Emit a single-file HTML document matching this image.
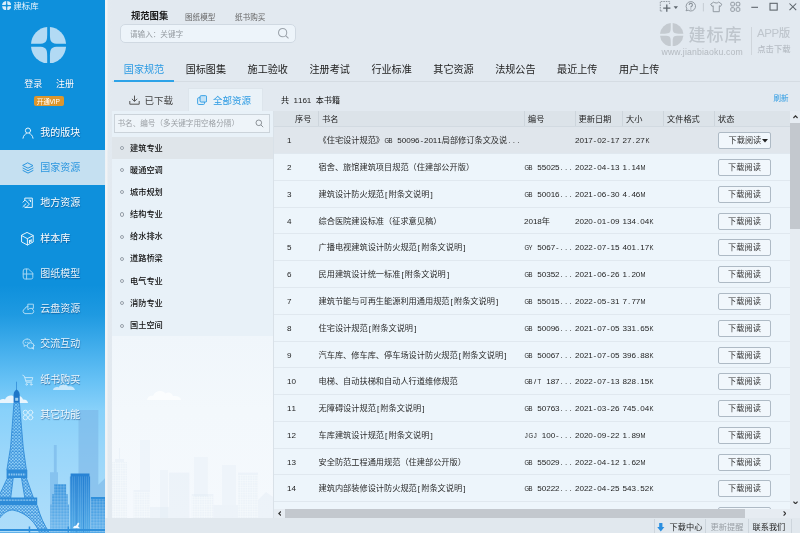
<!DOCTYPE html>
<html lang="zh-CN">
<head>
<meta charset="utf-8">
<title>建标库</title>
<style>
*{margin:0;padding:0;box-sizing:border-box}
html,body{width:800px;height:533px;overflow:hidden}
body{position:relative;background:#e2e9f0;font-family:"Liberation Sans","Noto Sans CJK SC",sans-serif;color:#333}
.t{position:absolute;white-space:nowrap;line-height:1}
#app{position:absolute;left:0;top:0;width:800px;height:533px;overflow:hidden;will-change:transform;opacity:.999}
#side{position:absolute;left:0;top:0;width:105px;height:533px;background:linear-gradient(to bottom,#0e90dc 0,#0e90dc 285px,#1f9ae1 315px,#43aeec 348px,#66c1f5 380px,#88d1fa 410px,#99d6fa 450px,#a7dbfa 500px,#aeddfa 533px);overflow:hidden}
#sidegap{position:absolute;left:105px;top:0;width:7px;height:533px;background:linear-gradient(to right,#e9f1f8 0,#f3f4f5 1.2px,#f1f3f5 2px,#e3eaf0 3px,#e2e9f0 7px)}
.menu{position:absolute;left:0;width:105px;height:35px;color:#fff;font-size:10px}
.menu .t{left:40.3px;top:13.2px;text-shadow:.4px .6px 1px rgba(0,50,110,.55)}
.menu.sel{background:#c5e0f1;color:#2b96df}
.menu.sel .t{text-shadow:none}
.menu svg{position:absolute;left:21.5px;top:12.2px;overflow:visible;opacity:.9}
.menu.lo svg{opacity:.62}
.menu.lo .t{color:rgba(255,255,255,.9)}
.menu.sel svg{opacity:1}
.c{display:inline-block;width:4.45px;text-align:center;font-size:8.1px;color:#1f1f1f}
.u{transform:scaleX(.74)}
.sim{font-family:"Liberation Sans","Noto Sans CJK SC",sans-serif}
.row{position:absolute;left:274px;width:516px;height:27px;background:#edf5fb;border-bottom:1px solid #e0e8ef;font-size:8.2px;color:#2a2a2a}
.row .t{top:10.1px}
.row.sel{background:#e0e6ec}
.btn{position:absolute;left:444px;top:5.4px;width:53px;height:16.6px;border:1px solid #aebac5;border-radius:2px;background:#f1f7fc;font-size:8.2px;text-align:center;line-height:15.6px;color:#333}
.cat{position:absolute;left:112px;width:161px;height:22px;font-size:8.2px;color:#111;font-family:"Liberation Sans","Noto Sans CJK SC",sans-serif;font-weight:500}
.cat .t{left:18px;top:7.7px}
.cat i{position:absolute;left:8.2px;top:9px;width:4.2px;height:4.2px;border:1px solid #949ea8;border-radius:50%;background:#f0f4f8}
.cat.sel{background:#dfe5ea}
.tab{position:absolute;top:64.7px;font-size:10.1px;color:#222;line-height:1;white-space:nowrap}
.hd{position:absolute;top:4.6px;font-size:8.2px;line-height:1;white-space:nowrap;color:#222}
.vsep{position:absolute;top:0;width:1px;height:15px;background:#cdd5dc}
</style>
</head>
<body>
<div id="app">

<div id="side">
<svg style="position:absolute;left:0;top:370px" width="105" height="163" viewBox="0 370 105 163">
<defs>
<pattern id="lat" width="3.200" height="3.200" patternUnits="userSpaceOnUse"><rect width="3.200" height="3.200" fill="#7fc3f1" fill-opacity=".35"/><path d="M0 0L3.200 3.200M3.200 0L0 3.200M0 0H3.200" stroke="#2a86d6" stroke-width=".6"/></pattern>
<pattern id="grd" width="1.5" height="1.5" patternUnits="userSpaceOnUse"><rect width="1.5" height="1.5" fill="#ffffff" fill-opacity=".0"/><path d="M0 .2H1.5M.2 0V1.5" stroke="#d8ecfa" stroke-opacity=".5" stroke-width=".4"/></pattern>
<pattern id="vst" width="2" height="4" patternUnits="userSpaceOnUse"><path d="M.5 0V4" stroke="#9bd0f5" stroke-opacity=".45" stroke-width=".5"/></pattern>
<linearGradient id="b1" x1="0" y1="0" x2="0" y2="1"><stop offset="0" stop-color="#2f8fdb"/><stop offset="1" stop-color="#6ab6ed"/></linearGradient>
<linearGradient id="b2" x1="0" y1="0" x2="0" y2="1"><stop offset="0" stop-color="#2782d4"/><stop offset="1" stop-color="#55ade8"/></linearGradient>
<linearGradient id="b3" x1="0" y1="0" x2="0" y2="1"><stop offset="0" stop-color="#2f8fdb"/><stop offset="1" stop-color="#62b2ec"/></linearGradient>
</defs>
<!-- clouds -->
<path d="M-2 403C-1 399 3 398.500 5 399.500C6.500 395.500 12 394 14.500 397C17 394.500 22 395.500 23 399.500C26 399.300 28 401 28 403Z" fill="#e9f5fd"/>
<path d="M53 390C53.500 387 57 386.500 58.500 387.500C60 384 66 383.500 68 386.500C71 385.500 74.500 387 75 390Z" fill="#d3ebfb" fill-opacity=".9"/>
<!-- faint tall buildings -->
<path d="M78.500 410H98.300V484.700L105.300 478V533H78.500Z" fill="#79b2e4" fill-opacity=".55"/>
<path d="M53.900 445H56.700V472.300H58V533H50V472.300H53.900Z" fill="#7fbdec" fill-opacity=".8"/>
<!-- building 1 -->
<path d="M54 484.200H66.100V494.300H67.800V504.500H69.100V533H50.400V504.500H52V494.300H54Z" fill="url(#b1)"/>
<path d="M54 484.200H66.100V494.300H67.800V504.500H69.100V533H50.400V504.500H52V494.300H54Z" fill="url(#grd)"/>
<!-- building 2 -->
<path d="M70.600 473.400H89.500V476.400H90.100V533H69.900V476.400H70.600Z" fill="url(#b2)"/>
<rect x="69.900" y="476.400" width="20.200" height="56.600" fill="url(#vst)"/>
<path d="M76.500 476.400V533M83.500 476.400V533" stroke="#1f78cc" stroke-opacity=".5" stroke-width=".8"/>
<!-- building 3 -->
<rect x="90.900" y="497" width="14.400" height="36" fill="url(#b3)"/>
<rect x="90.900" y="499" width="14.400" height="34" fill="url(#grd)"/>
<!-- eiffel -->
<g>
<path d="M16.500 381.700V391" stroke="#2a84d2" stroke-width=".7"/>
<path d="M13.600 402.500V394.500C13.600 391.500 16 390 16.600 389.500C17.300 390 19.700 391.500 19.700 394.500V402.500Z" fill="#1f76c8"/>
<rect x="15.200" y="397.800" width="3" height="3" fill="#9fd0f3"/>
<path d="M14 402.500H19.400L23.200 447L26.400 470H6.900L10.600 447Z" fill="url(#lat)" stroke="#2a86d6" stroke-width=".8"/>
<path d="M6.600 469.800H27.300V478H6.600Z" fill="#2d8bd8"/>
<path d="M8.500 474.500H25.500" stroke="#8cc6f0" stroke-width="2" stroke-dasharray="1.600 .8"/>
<path d="M7.400 478H13.200L10.700 498H-1V496Z" fill="url(#lat)" stroke="#2a86d6" stroke-width=".8"/>
<path d="M21.500 478H26.400L33.500 498H24.800Z" fill="url(#lat)" stroke="#2a86d6" stroke-width=".8"/>
<path d="M-1 497.600H37.200V505.300H-1Z" fill="#2d8bd8"/>
<path d="M0 500.200H36" stroke="#8cc6f0" stroke-width="1.200" stroke-dasharray="2.200 .7"/>
<path d="M25 505.300H37.200C40 516 44 525 49.600 533H39.700C36 524 28 513 13 510C8 510 3 513 -1 519V505.300Z" fill="url(#lat)"/>
<path d="M37.200 505.300C40 516 44 525 49.600 533M39.700 533C36 524 28 513 13 510C8 510 3 513 -1 519" fill="none" stroke="#2d8bd8" stroke-width=".9"/>
</g>
<!-- railing -->
<rect x="0" y="529" width="105" height="2" fill="#2f90dc"/>
<rect x="28.700" y="526.500" width="1.500" height="6.500" fill="#2f90dc"/><rect x="67.600" y="526.500" width="1.500" height="6.500" fill="#2f90dc"/>
<path d="M0 533H105" stroke="#4aa3e4" stroke-width="1.500"/>
<!-- cyclist -->
<path d="M73 528.300C73.500 526 75 525.500 76 525.800L77.500 523.200C78.300 522.300 79.600 523 79.200 524L78 526.200L80 528.300Z" fill="#f4faff"/>
</svg>

<svg class="t" style="left:2px;top:0.8px" width="9.4" height="9.4" viewBox="0 0 36 36" preserveAspectRatio="none" fill="#d9edf9"><path d="M15.8 0.05V9C15.8 15 15 15.8 9 15.8H0.05A18 18 0 0 1 15.8 0.05Z" transform="rotate(0 18 18)"/><path d="M15.8 0.05V9C15.8 15 15 15.8 9 15.8H0.05A18 18 0 0 1 15.8 0.05Z" transform="rotate(90 18 18)"/><path d="M15.8 0.05V9C15.8 15 15 15.8 9 15.8H0.05A18 18 0 0 1 15.8 0.05Z" transform="rotate(180 18 18)"/><path d="M15.8 0.05V9C15.8 15 15 15.8 9 15.8H0.05A18 18 0 0 1 15.8 0.05Z" transform="rotate(270 18 18)"/></svg>
<div class="t" style="left:13.5px;top:1.5px;font-size:8.4px;color:#e8f4fc">建标库</div>
<svg class="t" style="left:30.7px;top:26.6px" width="35.1" height="36.6" viewBox="0 0 36 36" preserveAspectRatio="none" fill="#b2daf4"><path d="M16.6 0.05V7.5C16.6 15 15 16.6 7.5 16.6H0.05A18 18 0 0 1 16.6 0.05Z" transform="rotate(0 18 18)"/><path d="M16.6 0.05V7.5C16.6 15 15 16.6 7.5 16.6H0.05A18 18 0 0 1 16.6 0.05Z" transform="rotate(90 18 18)"/><path d="M16.6 0.05V7.5C16.6 15 15 16.6 7.5 16.6H0.05A18 18 0 0 1 16.6 0.05Z" transform="rotate(180 18 18)"/><path d="M16.6 0.05V7.5C16.6 15 15 16.6 7.5 16.6H0.05A18 18 0 0 1 16.6 0.05Z" transform="rotate(270 18 18)"/></svg>
<div class="t" style="left:24.3px;top:79.5px;font-size:9px;color:#fff;text-shadow:0 0 1px rgba(0,60,130,.4)">登录</div>
<div class="t" style="left:56px;top:79.5px;font-size:9px;color:#fff;text-shadow:0 0 1px rgba(0,60,130,.4)">注册</div>
<div style="position:absolute;left:34px;top:95.5px;width:29.5px;height:10.5px;border-radius:2px;background:#dc962d"></div>
<div class="t" style="left:36.8px;top:98.6px;font-size:6.6px;color:#fff;letter-spacing:-.2px">开通VIP</div>
<div class="menu" style="top:114.7px"><svg width="12" height="12" viewBox="0 0 12 12" stroke="currentColor" fill="none" stroke-width="1" stroke-linecap="round" stroke-linejoin="round"><circle cx="6" cy="3.6" r="2.6"/><path d="M1 11.2c.4-2.6 2-4.2 3.4-4.6M11 11.2c-.4-2.6-2-4.2-3.4-4.6"/></svg><div class="t">我的版块</div></div>
<div class="menu sel" style="top:149.9px"><svg width="12" height="12" viewBox="0 0 12 12" stroke="currentColor" fill="none" stroke-width="1" stroke-linecap="round" stroke-linejoin="round"><path d="M6 1L11 3.6L6 6.2L1 3.6Z"/><path d="M1 6.1L6 8.7L11 6.1"/><path d="M1 8.5L6 11.1L11 8.5"/></svg><div class="t">国家资源</div></div>
<div class="menu" style="top:185.2px"><svg width="12" height="12" viewBox="0 0 12 12" stroke="currentColor" fill="none" stroke-width="1" stroke-linecap="round" stroke-linejoin="round"><path d="M2.8 2.6V1.100H10.300V10.400H2.800V9.800"/><path d="M1 5.100L3.200 2.900L7.400 7.100L3.700 10.800M1 9.600L3.900 6.800M7 3.100H8.500V4.600"/></svg><div class="t">地方资源</div></div>
<div class="menu" style="top:220.4px"><svg style="left:20.600px;top:11.300px" width="12.800" height="13.600" viewBox="0 0 13 13.600" stroke="currentColor" fill="none" stroke-width="1" stroke-linecap="round" stroke-linejoin="round"><path d="M6.500 .5L12.400 3.500V10L6.500 13.100L.6 10V3.500Z"/><path d="M.6 3.500L6.500 6.700L12.400 3.500M6.500 6.700V13.100"/><path d="M8.600 8.300v2.400M10.300 7.500v2.400M8.600 9.300l1.700-.8" stroke-width="1.100"/></svg><div class="t">样本库</div></div>
<div class="menu lo" style="top:255.7px"><svg width="12" height="12" viewBox="0 0 12 12" stroke="currentColor" fill="none" stroke-width="1" stroke-linecap="round" stroke-linejoin="round"><path d="M1.2 2.6a1.6 1.6 0 0 1 1.6-1.6H6.4L10.8 5V9.4a1.6 1.6 0 0 1-1.6 1.6H2.8a1.6 1.6 0 0 1-1.6-1.6Z"/><path d="M4.6 1V11M1.2 6H10.8"/></svg><div class="t">图纸模型</div></div>
<div class="menu lo" style="top:290.9px"><svg width="13" height="12" viewBox="0 0 13 12" stroke="currentColor" fill="none" stroke-width="1" stroke-linecap="round" stroke-linejoin="round"><path d="M3.2 10.6a2.4 2.4 0 0 1-.4-4.7A3.3 3.3 0 0 1 6 3.4M3.2 10.6H9.6a2.3 2.3 0 0 0 .8-4.4"/><path d="M6.2 1.2H11.4V5.4H7.8L6.2 6.6Z"/></svg><div class="t">云盘资源</div></div>
<div class="menu lo" style="top:326.2px"><svg width="13" height="12" viewBox="0 0 13 12" stroke="currentColor" fill="none" stroke-width="1" stroke-linecap="round" stroke-linejoin="round"><path d="M5.2 1C2.8 1 1 2.5 1 4.4c0 1 .5 1.9 1.3 2.5L2 8.4l1.7-.9c.5.1 1 .2 1.5.2"/><path d="M5.2 1c2.3 0 4.2 1.5 4.2 3.4"/><ellipse cx="8.6" cy="7.6" rx="3.4" ry="2.8"/><path d="M10 10.2l1.6 1-.2-1.8"/><path d="M3.4 4.2h.1M5.2 4.2h.1M7 4.2h.1" stroke-width="1.1"/></svg><div class="t">交流互动</div></div>
<div class="menu lo" style="top:361.4px"><svg width="13" height="12" viewBox="0 0 13 12" stroke="currentColor" fill="none" stroke-width="1" stroke-linecap="round" stroke-linejoin="round"><path d="M.8 1.300L2.400 2.200L4.200 8.200H9.800"/><path d="M3 3.600H10.800L9.800 6.800H4"/><circle cx="4.700" cy="10.400" r=".8"/><circle cx="9.200" cy="10.400" r=".8"/></svg><div class="t">纸书购买</div></div>
<div class="menu lo" style="top:396.7px"><svg width="12" height="12" viewBox="0 0 12 12" stroke="currentColor" fill="none" stroke-width="1" stroke-linecap="round" stroke-linejoin="round"><circle cx="3.4" cy="3.4" r="2.2"/><circle cx="8.6" cy="3.4" r="2.2"/><circle cx="3.4" cy="8.6" r="2.2"/><circle cx="8.6" cy="8.6" r="2.2"/></svg><div class="t">其它功能</div></div>
</div>
<div id="sidegap"></div>
<div class="t" style="left:131px;top:12px;font-size:9.3px;font-weight:bold;color:#1a1a1a">规范图集</div>
<div class="t" style="left:185px;top:13.7px;font-size:7.6px;color:#666">图纸模型</div>
<div class="t" style="left:235px;top:13.7px;font-size:7.6px;color:#666">纸书购买</div>
<div style="position:absolute;left:120px;top:24px;width:176px;height:19px;border:1px solid #d0d9e2;border-radius:5px;background:#edf4fa"></div>
<div class="t" style="left:130px;top:30.5px;font-size:7.6px;color:#959ba1">请输入：关键字</div>
<svg class="t" style="left:276.5px;top:27px" width="13" height="13" viewBox="0 0 12 12" fill="none" stroke="#9aa2aa" stroke-width=".95"><circle cx="5.2" cy="5.2" r="3.8"/><path d="M8 8L10.6 10.6"/></svg>
<svg class="t" style="left:655px;top:0" width="145" height="14" viewBox="655 0 145 14" fill="none" stroke="#8a929a" stroke-width=".9">
<path d="M660.3 11V1.5H669.6V4" stroke-dasharray="1.6 .9"/><path d="M660.3 11H663" stroke-dasharray="1.6 .9"/>
<path d="M666.8 4.6V11.8M663.2 8.2H670.4" stroke="#5f676f" stroke-width="1.3"/>
<path d="M673.6 6.2H678L675.8 9Z" fill="#5f676f" stroke="none"/>
<path d="M690.8 1.6a4.7 4.7 0 1 1-2.6 8.6L686 10.8l.9-1.9A4.7 4.7 0 0 1 690.8 1.600Z"/>
<path d="M689.2 4.9a1.6 1.5 0 1 1 2.4 1.3c-.6.4-.8.7-.8 1.4M690.8 8.600v.9" stroke-width="1.1"/>
<path d="M703.4 3V11.400" stroke="#c3cad0"/>
<path d="M713.8 2L710.700 4.200L712 6.400L713.200 5.800V11.700H719.300V5.800L720.500 6.400L721.800 4.200L718.700 2C718 3.300 714.500 3.300 713.800 2Z" stroke-linejoin="round"/>
<rect x="730.8" y="2.300" width="3.600" height="3.600" rx=".9"/><rect x="736.2" y="2.300" width="3.600" height="3.600" rx=".9"/><rect x="730.8" y="7.700" width="3.600" height="3.600" rx=".9"/><rect x="736.2" y="7.700" width="3.600" height="3.600" rx=".9"/>
<path d="M751.3 7.300H758" stroke="#5a6168" stroke-width="1.05"/>
<rect x="770" y="3.300" width="7.200" height="6.800" stroke="#5a6168" stroke-width="1.05"/>
<path d="M789.500 3.500L796.200 10.200M796.200 3.500L789.500 10.200" stroke="#5a6168" stroke-width="1.05"/>
</svg>

<svg class="t" style="left:660.3px;top:23px" width="23.4" height="23.4" viewBox="0 0 36 36" preserveAspectRatio="none" fill="#c4cad0"><path d="M16.5 0.05V7.5C16.5 15 15 16.5 7.5 16.5H0.05A18 18 0 0 1 16.5 0.05Z" transform="rotate(0 18 18)"/><path d="M16.5 0.05V7.5C16.5 15 15 16.5 7.5 16.5H0.05A18 18 0 0 1 16.5 0.05Z" transform="rotate(90 18 18)"/><path d="M16.5 0.05V7.5C16.5 15 15 16.5 7.5 16.5H0.05A18 18 0 0 1 16.5 0.05Z" transform="rotate(180 18 18)"/><path d="M16.5 0.05V7.5C16.5 15 15 16.5 7.5 16.5H0.05A18 18 0 0 1 16.5 0.05Z" transform="rotate(270 18 18)"/></svg>
<div class="t" style="left:688.5px;top:26.500px;font-size:17px;letter-spacing:1px;color:#bfc6cd;font-weight:500">建标库</div>
<div class="t" style="left:661.5px;top:48px;font-size:8.700px;color:#b4bac0;letter-spacing:.15px">www.jianbiaoku.com</div>
<div style="position:absolute;left:750.5px;top:27px;width:1px;height:27.500px;background:#cfd5db"></div>
<div class="t" style="left:757px;top:27.500px;font-size:11.500px;color:#bfc6cd;letter-spacing:-.4px;font-weight:500">APP版</div>
<div class="t" style="left:757.3px;top:45px;font-size:8.300px;color:#b6bdc4;font-weight:500">点击下载</div>

<div class="tab" style="left:123.8px;color:#2c9be3">国家规范</div>
<div class="tab" style="left:185.7px">国标图集</div>
<div class="tab" style="left:247.6px">施工验收</div>
<div class="tab" style="left:309.5px">注册考试</div>
<div class="tab" style="left:371.4px">行业标准</div>
<div class="tab" style="left:433.3px">其它资源</div>
<div class="tab" style="left:495.2px">法规公告</div>
<div class="tab" style="left:557.1px">最近上传</div>
<div class="tab" style="left:619.0px">用户上传</div>
<div style="position:absolute;left:112px;top:81px;width:688px;height:1px;background:#d5dce3"></div>
<div style="position:absolute;left:114px;top:80px;width:59.5px;height:2px;background:#2da3e8"></div>
<div style="position:absolute;left:187.5px;top:88px;width:75.5px;height:23px;background:#eaf2f8;border:1px solid #dde5ec;border-bottom:none"></div>
<svg class="t" style="left:128.5px;top:95.2px" width="11" height="10" viewBox="0 0 11 10" fill="none" stroke="#555" stroke-width="1"><path d="M5.500 .6V6.200M2.900 3.800L5.500 6.400L8.100 3.800M.8 6V9.200H10.200V6"/></svg>
<div class="t" style="left:144.6px;top:95.8px;font-size:9.5px;color:#444">已下载</div>
<svg class="t" style="left:196.600px;top:95px" width="10.400" height="10" viewBox="0 0 11 10.600" fill="none" stroke="#2c9be3" stroke-width="1"><rect x="3.200" y=".7" width="7" height="6.800" rx="1.200" fill="#c3e2f6"/><path d="M3.200 2.900H1.700a1 1 0 0 0-1 1V9a1 1 0 0 0 1 1H6.900a1 1 0 0 0 1-1V7.500"/></svg>
<div class="t" style="left:213px;top:95.8px;font-size:9.5px;color:#2c9be3">全部资源</div>
<div class="t sim" style="left:281px;top:97.2px;font-size:8.1px;color:#111">共<span class="c">&nbsp;</span><span class="c">1</span><span class="c">1</span><span class="c">6</span><span class="c">1</span><span class="c">&nbsp;</span>本书籍</div>
<div class="t" style="left:773.5px;top:94.6px;font-size:7.5px;color:#2c9be3">刷新</div>
<div style="position:absolute;left:112px;top:111px;width:161px;height:407px;background:linear-gradient(to bottom,#e8f1f8 0,#e8f1f8 225px,#f0f6fb 225px,#f3f8fc 300px,#f5f9fd 407px);overflow:hidden"><svg style="position:absolute;left:0;top:0" width="161" height="407" viewBox="112 111 161 407">
<defs><pattern id="g2" width="2.400" height="2.400" patternUnits="userSpaceOnUse"><path d="M0 .3H2.400M.3 0V2.400" stroke="#f7fafd" stroke-opacity=".8" stroke-width=".6"/></pattern></defs>
<path d="M147 400C147.500 396 151 395 153 396C155 390 163 389.500 165.500 393.500C168 391.500 172 392.500 173 396C177 395.500 181 397 181 400Z" fill="#fbfdfe"/>
<g fill="#d9e6f2" fill-opacity=".3">
<path d="M119 448H120V459H124V462H127V518H112V462H115V459H119Z"/>
<rect x="133.500" y="490" width="16.500" height="28"/>
<rect x="150" y="507" width="19" height="11"/>
<rect x="169" y="472.600" width="20.400" height="45.400"/>
<rect x="191.700" y="494" width="21.700" height="24"/>
<rect x="213.400" y="505" width="24.600" height="13"/>
<rect x="238" y="472.600" width="20" height="45.400"/>
<path d="M258 518V500L266 492L273 497V518Z"/>
</g>
<g fill="#dde9f4" fill-opacity=".25">
<rect x="194" y="457" width="13.700" height="40"/>
<rect x="140" y="440" width="10" height="50"/>
<path d="M160 470H168V518H160Z"/>
<rect x="222" y="465" width="14" height="40"/>
</g>
<g fill="url(#g2)">
<rect x="112" y="462" width="15" height="56"/><rect x="133.500" y="492" width="16.500" height="26"/><rect x="191.700" y="496" width="21.700" height="22"/><rect x="238" y="475" width="20" height="43"/>
</g>
</svg>
</div>
<div style="position:absolute;left:273px;top:111px;width:1px;height:407px;background:#d9e1e8"></div>
<div style="position:absolute;left:114px;top:114px;width:156px;height:19px;border:1px solid #cbd3da;background:#eef4f9"></div>
<div class="t" style="left:117.5px;top:119.7px;font-size:7.6px;color:#9a9fa4">书名、编号（多关键字用空格分隔）</div>
<svg class="t" style="left:254.5px;top:119px" width="9" height="9" viewBox="0 0 9 9" fill="none" stroke="#8b9197" stroke-width="1"><circle cx="3.8" cy="3.8" r="2.8"/><path d="M5.9 5.9L8.2 8.2"/></svg>
<div class="cat sel sim" style="top:137.2px"><i></i><div class="t">建筑专业</div></div>
<div class="cat sim" style="top:159.2px"><i></i><div class="t">暖通空调</div></div>
<div class="cat sim" style="top:181.2px"><i></i><div class="t">城市规划</div></div>
<div class="cat sim" style="top:203.4px"><i></i><div class="t">结构专业</div></div>
<div class="cat sim" style="top:225.5px"><i></i><div class="t">给水排水</div></div>
<div class="cat sim" style="top:247.6px"><i></i><div class="t">道路桥梁</div></div>
<div class="cat sim" style="top:270.1px"><i></i><div class="t">电气专业</div></div>
<div class="cat sim" style="top:292.2px"><i></i><div class="t">消防专业</div></div>
<div class="cat sim" style="top:314.6px"><i></i><div class="t">国土空间</div></div>
<div style="position:absolute;left:274px;top:111px;width:526px;height:407px;background:#e9eef3;overflow:hidden">
</div>
<div style="position:absolute;left:274px;top:127px;width:516px;height:382px;overflow:hidden">
<div class="row sel sim" style="left:0;top:0px;height:27px"><div class="t" style="left:13px"><span class="c">1</span></div><div class="t" style="left:44.5px">《住宅设计规范》<span class="c u">G</span><span class="c u">B</span><span class="c">&nbsp;</span><span class="c">5</span><span class="c">0</span><span class="c">0</span><span class="c">9</span><span class="c">6</span><span class="c">-</span><span class="c">2</span><span class="c">0</span><span class="c">1</span><span class="c">1</span>局部修订条文及说<span class="c">.</span><span class="c">.</span><span class="c">.</span></div><div class="t" style="left:250px"></div><div class="t" style="left:301px"><span class="c">2</span><span class="c">0</span><span class="c">1</span><span class="c">7</span><span class="c">-</span><span class="c">0</span><span class="c">2</span><span class="c">-</span><span class="c">1</span><span class="c">7</span></div><div class="t" style="left:348.5px"><span class="c">2</span><span class="c">7</span><span class="c">.</span><span class="c">2</span><span class="c">7</span><span class="c u">K</span></div><div class="btn" style="text-align:left;padding-left:9.5px">下载阅读<svg style="position:absolute;left:43px;top:6px" width="6" height="4" viewBox="0 0 6 4"><path d="M0 0H6L3 3.6Z" fill="#222"/></svg></div></div>
<div class="row sim" style="left:0;top:27px;height:27px"><div class="t" style="left:13px"><span class="c">2</span></div><div class="t" style="left:44.5px">宿舍、旅馆建筑项目规范（住建部公开版）</div><div class="t" style="left:250px"><span class="c u">G</span><span class="c u">B</span><span class="c">&nbsp;</span><span class="c">5</span><span class="c">5</span><span class="c">0</span><span class="c">2</span><span class="c">5</span><span class="c">.</span><span class="c">.</span><span class="c">.</span></div><div class="t" style="left:301px"><span class="c">2</span><span class="c">0</span><span class="c">2</span><span class="c">2</span><span class="c">-</span><span class="c">0</span><span class="c">4</span><span class="c">-</span><span class="c">1</span><span class="c">3</span></div><div class="t" style="left:348.5px"><span class="c">1</span><span class="c">.</span><span class="c">1</span><span class="c">4</span><span class="c u">M</span></div><div class="btn">下载阅读</div></div>
<div class="row sim" style="left:0;top:54px;height:27px"><div class="t" style="left:13px"><span class="c">3</span></div><div class="t" style="left:44.5px">建筑设计防火规范<span class="c">[</span>附条文说明<span class="c">]</span></div><div class="t" style="left:250px"><span class="c u">G</span><span class="c u">B</span><span class="c">&nbsp;</span><span class="c">5</span><span class="c">0</span><span class="c">0</span><span class="c">1</span><span class="c">6</span><span class="c">.</span><span class="c">.</span><span class="c">.</span></div><div class="t" style="left:301px"><span class="c">2</span><span class="c">0</span><span class="c">2</span><span class="c">1</span><span class="c">-</span><span class="c">0</span><span class="c">6</span><span class="c">-</span><span class="c">3</span><span class="c">0</span></div><div class="t" style="left:348.5px"><span class="c">4</span><span class="c">.</span><span class="c">4</span><span class="c">6</span><span class="c u">M</span></div><div class="btn">下载阅读</div></div>
<div class="row sim" style="left:0;top:81px;height:26px"><div class="t" style="left:13px"><span class="c">4</span></div><div class="t" style="left:44.5px">综合医院建设标准（征求意见稿）</div><div class="t" style="left:250px"><span class="c">2</span><span class="c">0</span><span class="c">1</span><span class="c">8</span>年</div><div class="t" style="left:301px"><span class="c">2</span><span class="c">0</span><span class="c">2</span><span class="c">0</span><span class="c">-</span><span class="c">0</span><span class="c">1</span><span class="c">-</span><span class="c">0</span><span class="c">9</span></div><div class="t" style="left:348.5px"><span class="c">1</span><span class="c">3</span><span class="c">4</span><span class="c">.</span><span class="c">0</span><span class="c">4</span><span class="c u">K</span></div><div class="btn">下载阅读</div></div>
<div class="row sim" style="left:0;top:107px;height:27px"><div class="t" style="left:13px"><span class="c">5</span></div><div class="t" style="left:44.5px">广播电视建筑设计防火规范<span class="c">[</span>附条文说明<span class="c">]</span></div><div class="t" style="left:250px"><span class="c u">G</span><span class="c u">Y</span><span class="c">&nbsp;</span><span class="c">5</span><span class="c">0</span><span class="c">6</span><span class="c">7</span><span class="c">-</span><span class="c">.</span><span class="c">.</span><span class="c">.</span></div><div class="t" style="left:301px"><span class="c">2</span><span class="c">0</span><span class="c">2</span><span class="c">2</span><span class="c">-</span><span class="c">0</span><span class="c">7</span><span class="c">-</span><span class="c">1</span><span class="c">5</span></div><div class="t" style="left:348.5px"><span class="c">4</span><span class="c">0</span><span class="c">1</span><span class="c">.</span><span class="c">1</span><span class="c">7</span><span class="c u">K</span></div><div class="btn">下载阅读</div></div>
<div class="row sim" style="left:0;top:134px;height:27px"><div class="t" style="left:13px"><span class="c">6</span></div><div class="t" style="left:44.5px">民用建筑设计统一标准<span class="c">[</span>附条文说明<span class="c">]</span></div><div class="t" style="left:250px"><span class="c u">G</span><span class="c u">B</span><span class="c">&nbsp;</span><span class="c">5</span><span class="c">0</span><span class="c">3</span><span class="c">5</span><span class="c">2</span><span class="c">.</span><span class="c">.</span><span class="c">.</span></div><div class="t" style="left:301px"><span class="c">2</span><span class="c">0</span><span class="c">2</span><span class="c">1</span><span class="c">-</span><span class="c">0</span><span class="c">6</span><span class="c">-</span><span class="c">2</span><span class="c">6</span></div><div class="t" style="left:348.5px"><span class="c">1</span><span class="c">.</span><span class="c">2</span><span class="c">0</span><span class="c u">M</span></div><div class="btn">下载阅读</div></div>
<div class="row sim" style="left:0;top:161px;height:27px"><div class="t" style="left:13px"><span class="c">7</span></div><div class="t" style="left:44.5px">建筑节能与可再生能源利用通用规范<span class="c">[</span>附条文说明<span class="c">]</span></div><div class="t" style="left:250px"><span class="c u">G</span><span class="c u">B</span><span class="c">&nbsp;</span><span class="c">5</span><span class="c">5</span><span class="c">0</span><span class="c">1</span><span class="c">5</span><span class="c">.</span><span class="c">.</span><span class="c">.</span></div><div class="t" style="left:301px"><span class="c">2</span><span class="c">0</span><span class="c">2</span><span class="c">2</span><span class="c">-</span><span class="c">0</span><span class="c">5</span><span class="c">-</span><span class="c">3</span><span class="c">1</span></div><div class="t" style="left:348.5px"><span class="c">7</span><span class="c">.</span><span class="c">7</span><span class="c">7</span><span class="c u">M</span></div><div class="btn">下载阅读</div></div>
<div class="row sim" style="left:0;top:188px;height:27px"><div class="t" style="left:13px"><span class="c">8</span></div><div class="t" style="left:44.5px">住宅设计规范<span class="c">[</span>附条文说明<span class="c">]</span></div><div class="t" style="left:250px"><span class="c u">G</span><span class="c u">B</span><span class="c">&nbsp;</span><span class="c">5</span><span class="c">0</span><span class="c">0</span><span class="c">9</span><span class="c">6</span><span class="c">.</span><span class="c">.</span><span class="c">.</span></div><div class="t" style="left:301px"><span class="c">2</span><span class="c">0</span><span class="c">2</span><span class="c">1</span><span class="c">-</span><span class="c">0</span><span class="c">7</span><span class="c">-</span><span class="c">0</span><span class="c">5</span></div><div class="t" style="left:348.5px"><span class="c">3</span><span class="c">3</span><span class="c">1</span><span class="c">.</span><span class="c">6</span><span class="c">5</span><span class="c u">K</span></div><div class="btn">下载阅读</div></div>
<div class="row sim" style="left:0;top:215px;height:26px"><div class="t" style="left:13px"><span class="c">9</span></div><div class="t" style="left:44.5px">汽车库、修车库、停车场设计防火规范<span class="c">[</span>附条文说明<span class="c">]</span></div><div class="t" style="left:250px"><span class="c u">G</span><span class="c u">B</span><span class="c">&nbsp;</span><span class="c">5</span><span class="c">0</span><span class="c">0</span><span class="c">6</span><span class="c">7</span><span class="c">.</span><span class="c">.</span><span class="c">.</span></div><div class="t" style="left:301px"><span class="c">2</span><span class="c">0</span><span class="c">2</span><span class="c">1</span><span class="c">-</span><span class="c">0</span><span class="c">7</span><span class="c">-</span><span class="c">0</span><span class="c">5</span></div><div class="t" style="left:348.5px"><span class="c">3</span><span class="c">9</span><span class="c">6</span><span class="c">.</span><span class="c">8</span><span class="c">8</span><span class="c u">K</span></div><div class="btn">下载阅读</div></div>
<div class="row sim" style="left:0;top:241px;height:27px"><div class="t" style="left:13px"><span class="c">1</span><span class="c">0</span></div><div class="t" style="left:44.5px">电梯、自动扶梯和自动人行道维修规范</div><div class="t" style="left:250px"><span class="c u">G</span><span class="c u">B</span><span class="c">/</span><span class="c u">T</span><span class="c">&nbsp;</span><span class="c">1</span><span class="c">8</span><span class="c">7</span><span class="c">.</span><span class="c">.</span><span class="c">.</span></div><div class="t" style="left:301px"><span class="c">2</span><span class="c">0</span><span class="c">2</span><span class="c">2</span><span class="c">-</span><span class="c">0</span><span class="c">7</span><span class="c">-</span><span class="c">1</span><span class="c">3</span></div><div class="t" style="left:348.5px"><span class="c">8</span><span class="c">2</span><span class="c">8</span><span class="c">.</span><span class="c">1</span><span class="c">5</span><span class="c u">K</span></div><div class="btn">下载阅读</div></div>
<div class="row sim" style="left:0;top:268px;height:27px"><div class="t" style="left:13px"><span class="c">1</span><span class="c">1</span></div><div class="t" style="left:44.5px">无障碍设计规范<span class="c">[</span>附条文说明<span class="c">]</span></div><div class="t" style="left:250px"><span class="c u">G</span><span class="c u">B</span><span class="c">&nbsp;</span><span class="c">5</span><span class="c">0</span><span class="c">7</span><span class="c">6</span><span class="c">3</span><span class="c">.</span><span class="c">.</span><span class="c">.</span></div><div class="t" style="left:301px"><span class="c">2</span><span class="c">0</span><span class="c">2</span><span class="c">1</span><span class="c">-</span><span class="c">0</span><span class="c">3</span><span class="c">-</span><span class="c">2</span><span class="c">6</span></div><div class="t" style="left:348.5px"><span class="c">7</span><span class="c">4</span><span class="c">5</span><span class="c">.</span><span class="c">0</span><span class="c">4</span><span class="c u">K</span></div><div class="btn">下载阅读</div></div>
<div class="row sim" style="left:0;top:295px;height:27px"><div class="t" style="left:13px"><span class="c">1</span><span class="c">2</span></div><div class="t" style="left:44.5px">车库建筑设计规范<span class="c">[</span>附条文说明<span class="c">]</span></div><div class="t" style="left:250px"><span class="c u">J</span><span class="c u">G</span><span class="c u">J</span><span class="c">&nbsp;</span><span class="c">1</span><span class="c">0</span><span class="c">0</span><span class="c">-</span><span class="c">.</span><span class="c">.</span><span class="c">.</span></div><div class="t" style="left:301px"><span class="c">2</span><span class="c">0</span><span class="c">2</span><span class="c">0</span><span class="c">-</span><span class="c">0</span><span class="c">9</span><span class="c">-</span><span class="c">2</span><span class="c">2</span></div><div class="t" style="left:348.5px"><span class="c">1</span><span class="c">.</span><span class="c">8</span><span class="c">9</span><span class="c u">M</span></div><div class="btn">下载阅读</div></div>
<div class="row sim" style="left:0;top:322px;height:26px"><div class="t" style="left:13px"><span class="c">1</span><span class="c">3</span></div><div class="t" style="left:44.5px">安全防范工程通用规范（住建部公开版）</div><div class="t" style="left:250px"><span class="c u">G</span><span class="c u">B</span><span class="c">&nbsp;</span><span class="c">5</span><span class="c">5</span><span class="c">0</span><span class="c">2</span><span class="c">9</span><span class="c">.</span><span class="c">.</span><span class="c">.</span></div><div class="t" style="left:301px"><span class="c">2</span><span class="c">0</span><span class="c">2</span><span class="c">2</span><span class="c">-</span><span class="c">0</span><span class="c">4</span><span class="c">-</span><span class="c">1</span><span class="c">2</span></div><div class="t" style="left:348.5px"><span class="c">1</span><span class="c">.</span><span class="c">6</span><span class="c">2</span><span class="c u">M</span></div><div class="btn">下载阅读</div></div>
<div class="row sim" style="left:0;top:348px;height:27px"><div class="t" style="left:13px"><span class="c">1</span><span class="c">4</span></div><div class="t" style="left:44.5px">建筑内部装修设计防火规范<span class="c">[</span>附条文说明<span class="c">]</span></div><div class="t" style="left:250px"><span class="c u">G</span><span class="c u">B</span><span class="c">&nbsp;</span><span class="c">5</span><span class="c">0</span><span class="c">2</span><span class="c">2</span><span class="c">2</span><span class="c">.</span><span class="c">.</span><span class="c">.</span></div><div class="t" style="left:301px"><span class="c">2</span><span class="c">0</span><span class="c">2</span><span class="c">2</span><span class="c">-</span><span class="c">0</span><span class="c">4</span><span class="c">-</span><span class="c">2</span><span class="c">5</span></div><div class="t" style="left:348.5px"><span class="c">5</span><span class="c">4</span><span class="c">3</span><span class="c">.</span><span class="c">5</span><span class="c">2</span><span class="c u">K</span></div><div class="btn">下载阅读</div></div>
<div class="row sim" style="left:0;top:375px;height:27px"><div class="t" style="left:13px"><span class="c">1</span><span class="c">5</span></div><div class="t" style="left:44.5px"></div><div class="t" style="left:250px"></div><div class="t" style="left:301px"></div><div class="t" style="left:348.5px"></div><div class="btn">下载阅读</div></div>
</div>
<div class="sim" style="position:absolute;left:274px;top:111px;width:516px;height:16px;background:#dce3e9;border-bottom:1px solid #d2dae1">
<div class="hd" style="left:21px">序号</div>
<div class="hd" style="left:48px">书名</div>
<div class="hd" style="left:254px">编号</div>
<div class="hd" style="left:304.5px">更新日期</div>
<div class="hd" style="left:352px">大小</div>
<div class="hd" style="left:393px">文件格式</div>
<div class="hd" style="left:444px">状态</div>
<div class="vsep" style="left:43.5px"></div>
<div class="vsep" style="left:250px"></div>
<div class="vsep" style="left:300.5px"></div>
<div class="vsep" style="left:348px"></div>
<div class="vsep" style="left:389px"></div>
<div class="vsep" style="left:439.7px"></div>
</div>
<div style="position:absolute;left:790px;top:111px;width:10px;height:398px;background:#e6ecf2"></div>
<div style="position:absolute;left:790px;top:122.5px;width:10px;height:106.5px;background:#c3c8ce"></div>
<svg class="t" style="left:792.6px;top:115px" width="5" height="3.6" viewBox="0 0 7 5" fill="none" stroke="#333" stroke-width="1.7"><path d="M.6 4.2L3.5 1.2L6.4 4.2"/></svg>
<svg class="t" style="left:793.2px;top:500.6px" width="5" height="3.6" viewBox="0 0 7 5" fill="none" stroke="#333" stroke-width="1.7"><path d="M.6 .8L3.5 3.8L6.4 .8"/></svg>
<div style="position:absolute;left:274px;top:508.5px;width:526px;height:9.5px;background:#e6ecf2"></div>
<div style="position:absolute;left:284.5px;top:508.5px;width:460.5px;height:9.5px;background:#c3c8ce"></div>
<svg class="t" style="left:277.6px;top:510.8px" width="3.6" height="5" viewBox="0 0 5 7" fill="none" stroke="#333" stroke-width="1.7"><path d="M4.2 .6L1.2 3.5L4.2 6.4"/></svg>
<svg class="t" style="left:782.6px;top:510.8px" width="3.6" height="5" viewBox="0 0 5 7" fill="none" stroke="#333" stroke-width="1.7"><path d="M.8 .6L3.8 3.5L.8 6.4"/></svg>
<div style="position:absolute;left:105px;top:518px;width:695px;height:15px;background:#e1e8ee"></div>
<div style="position:absolute;left:653.5px;top:519px;width:1px;height:14px;background:#cdd5dc"></div>
<div style="position:absolute;left:704.5px;top:519px;width:1px;height:14px;background:#cdd5dc"></div>
<div style="position:absolute;left:748px;top:519px;width:1px;height:14px;background:#cdd5dc"></div>
<div style="position:absolute;left:791px;top:519px;width:1px;height:14px;background:#cdd5dc"></div>
<svg class="t" style="left:657.3px;top:522.6px" width="7.600" height="9" viewBox="0 0 8 10"><path d="M2.2 0H5.8V4.4H8L4 9.4L0 4.4H2.2Z" fill="#2b8fe0"/></svg>
<div class="t sim" style="left:669.5px;top:523.6px;font-size:8.2px;color:#222;letter-spacing:.1px">下载中心</div>
<div class="t sim" style="left:710.5px;top:523.6px;font-size:8.2px;color:#9aa0a6;letter-spacing:.1px">更新提醒</div>
<div class="t sim" style="left:752.5px;top:523.6px;font-size:8.2px;color:#222">联系我们</div>
</div>
</body>
</html>
